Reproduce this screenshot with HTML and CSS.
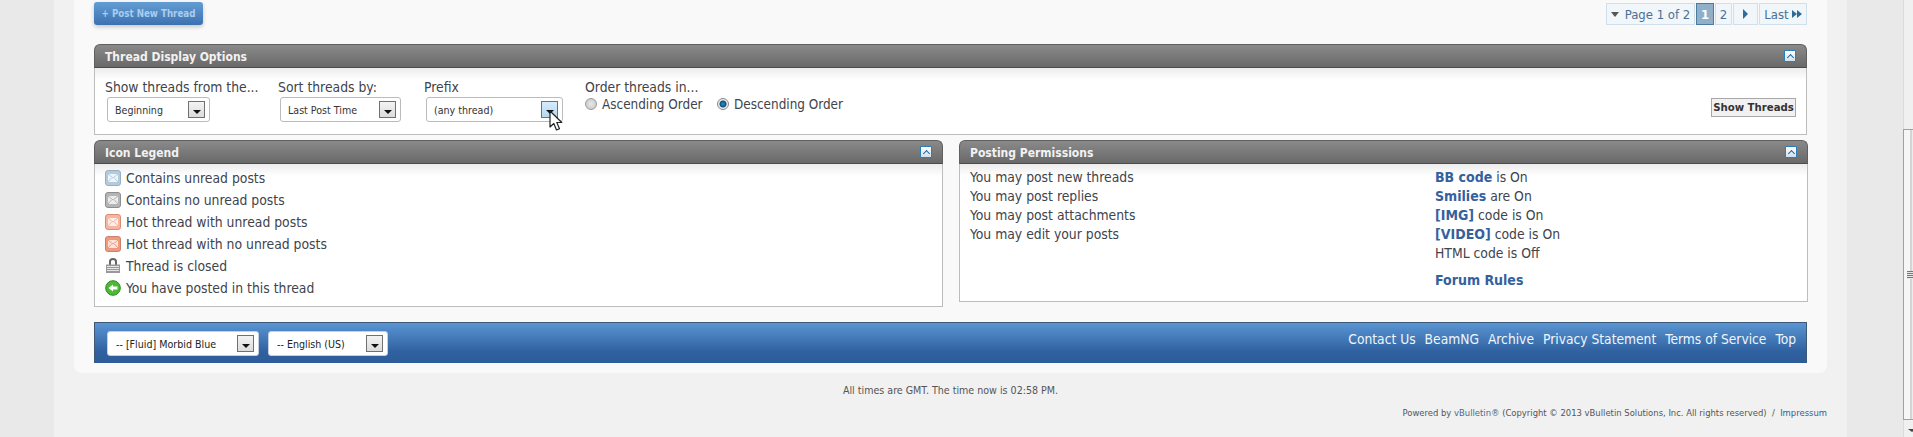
FILE: index.html
```html
<!DOCTYPE html>
<html>
  <head>
    <meta charset="UTF-8">
    <title>Thread options</title>
    <link rel="stylesheet" href="styles.css">
  </head>
  <body>
    <div class="viewport">
      <div class="page">
        <div class="panel">
          <div class="toolbar">
            <a class="newthread" href="#">+ Post New Thread</a>
            <div class="pagination">
              <span class="pg pg-label"><i class="tri-down"></i>Page 1 of 2</span>
              <span class="pg pg-current">1</span>
              <span class="pg pg-num">2</span>
              <span class="pg pg-next"><i class="tri-right"></i></span>
              <span class="pg pg-last">Last <i class="tri-right small"></i><i class="tri-right small"></i></span>
            </div>
          </div>

          <div class="block options">
            <div class="block-head">
              <h4>Thread Display Options</h4>
              <span class="collapse"><i></i></span>
            </div>
            <div class="block-body options-body">
              <div class="opt opt-from">
                <label>Show threads from the...</label>
                <div class="select sel-from">Beginning<span class="sel-btn"><i></i></span></div>
              </div>
              <div class="opt opt-sort">
                <label>Sort threads by:</label>
                <div class="select sel-sort">Last Post Time<span class="sel-btn"><i></i></span></div>
              </div>
              <div class="opt opt-prefix">
                <label>Prefix</label>
                <div class="select sel-prefix">(any thread)<span class="sel-btn hover"><i></i></span></div>
              </div>
              <div class="opt opt-order">
                <label>Order threads in...</label>
                <div class="radios">
                  <span class="radio"></span><span class="radio-text">Ascending Order</span>
                  <span class="radio on"></span><span class="radio-text">Descending Order</span>
                </div>
              </div>
              <button class="show-btn">Show Threads</button>
            </div>
          </div>

          <div class="columns">
            <div class="block legend">
              <div class="block-head">
                <h4>Icon Legend</h4>
                <span class="collapse"><i></i></span>
              </div>
              <div class="block-body legend-body">
                <div class="legend-row">
                  <svg class="ico" viewBox="0 0 16 16"><rect x="0.5" y="0.5" width="15" height="15" rx="2.5" fill="#b4cbdd" stroke="#98afc2"/><rect x="3" y="4" width="10" height="8" fill="#eef5fb"/><path d="M3 4l5 4 5-4M3 12l3.500-4M13 12l-3.500-4" fill="none" stroke="#b4cbdd"/></svg>
                  Contains unread posts
                </div>
                <div class="legend-row">
                  <svg class="ico" viewBox="0 0 16 16"><rect x="0.5" y="0.5" width="15" height="15" rx="2.5" fill="#b5b5b5" stroke="#8e8e8e"/><rect x="3" y="4" width="10" height="8" fill="#ededed"/><path d="M3 4l5 4 5-4M3 12l3.500-4M13 12l-3.500-4" fill="none" stroke="#b5b5b5"/></svg>
                  Contains no unread posts
                </div>
                <div class="legend-row">
                  <svg class="ico" viewBox="0 0 16 16"><rect x="0.5" y="0.5" width="15" height="15" rx="2.5" fill="#f6b5a0" stroke="#d98c74"/><rect x="3" y="4" width="10" height="8" fill="#fdeee8"/><path d="M3 4l5 4 5-4M3 12l3.500-4M13 12l-3.500-4" fill="none" stroke="#f6b5a0"/></svg>
                  Hot thread with unread posts
                </div>
                <div class="legend-row">
                  <svg class="ico" viewBox="0 0 16 16"><rect x="0.5" y="0.5" width="15" height="15" rx="2.5" fill="#ef9a7f" stroke="#c9826b"/><rect x="3" y="4" width="10" height="8" fill="#fce4da"/><path d="M3 4l5 4 5-4M3 12l3.500-4M13 12l-3.500-4" fill="none" stroke="#ef9a7f"/></svg>
                  Hot thread with no unread posts
                </div>
                <div class="legend-row">
                  <svg class="ico" viewBox="0 0 16 16"><path d="M5 7V3.500a3 2.500 0 0 1 6 0V7" fill="none" stroke="#666" stroke-width="2"/><rect x="1" y="6.500" width="14" height="8.500" fill="#999"/><path d="M2 8.500h12M2 10.500h12M2 12.500h12" stroke="#e6e6e6"/></svg>
                  Thread is closed
                </div>
                <div class="legend-row">
                  <svg class="ico" viewBox="0 0 16 16"><circle cx="8" cy="8" r="7.300" fill="#4cba35" stroke="#2b8a1c"/><path d="M3.500 8L8 4.500V6.500H12.500V9.500H8V11.500Z" fill="#fff"/></svg>
                  You have posted in this thread
                </div>
              </div>
            </div>

            <div class="block perms">
              <div class="block-head">
                <h4>Posting Permissions</h4>
                <span class="collapse"><i></i></span>
              </div>
              <div class="block-body perms-body">
                <ul class="perm-col">
                  <li>You may post new threads</li>
                  <li>You may post replies</li>
                  <li>You may post attachments</li>
                  <li>You may edit your posts</li>
                </ul>
                <ul class="perm-col">
                  <li><a href="#">BB code</a> is On</li>
                  <li><a href="#">Smilies</a> are On</li>
                  <li><a href="#">[IMG]</a> code is On</li>
                  <li><a href="#">[VIDEO]</a> code is On</li>
                  <li>HTML code is Off</li>
                  <li class="rules"><a href="#">Forum Rules</a></li>
                </ul>
              </div>
            </div>
          </div>

          <div class="footer-bar">
            <div class="select sel-style">-- [Fluid] Morbid Blue<span class="sel-btn"><i></i></span></div>
            <div class="select sel-lang">-- English (US)<span class="sel-btn"><i></i></span></div>
            <nav class="footer-links">
              <a href="#">Contact Us</a>
              <a href="#">BeamNG</a>
              <a href="#">Archive</a>
              <a href="#">Privacy Statement</a>
              <a href="#">Terms of Service</a>
              <a href="#">Top</a>
            </nav>
          </div>
        </div>

        <p class="times">All times are GMT. The time now is 02:58 PM.</p>
        <p class="powered">Powered by <a href="#">vBulletin®</a> (Copyright © 2013 vBulletin Solutions, Inc. All rights reserved) &nbsp;/&nbsp; <a class="impressum" href="#">Impressum</a></p>
      </div>
      <div class="scrollbar">
        <div class="thumb"><i class="grip"></i></div>
        <i class="sb-down"></i>
      </div>
    </div>
    <svg class="cursor" width="14" height="22" viewBox="0 0 14 22"><path d="M1 1V17L4.800 13.500L7.500 20L10.500 18.700L7.800 12.500L12.800 12.500Z" fill="#fff" stroke="#222" stroke-width="1.200" stroke-linejoin="round"/></svg>
  </body>
</html>
```

FILE: styles.css
```css
* {
  box-sizing: border-box;
}

html, body {
  margin: 0;
  height: 100%;
  overflow: hidden;
}

body {
  font-family: "DejaVu Sans", sans-serif;
  font-stretch: condensed;
  font-size: 13.800px;
  color: #40444c;
  background: #e9e9e9;
}

a {
  text-decoration: none;
}

.viewport {
  display: flex;
  height: 437px;
}

.page {
  width: 1793px;
  height: 437px;
  margin-left: 54px;
  margin-right: 56px;
  padding: 0 20px;
  background: #f1f1f1;
  overflow: hidden;
}

.panel {
  height: 373px;
  padding: 2px 20px 0;
  background: #f9f9f9;
  border-radius: 0 0 8px 8px;
}

/* top row */
.toolbar {
  display: flex;
  justify-content: space-between;
  align-items: flex-start;
  height: 42px;
}

.newthread {
  display: block;
  width: 109px;
  height: 23px;
  line-height: 23px;
  text-align: center;
  font-size: 9.700px;
  font-weight: bold;
  color: #a9cdee;
  background: linear-gradient(#649dd3, #3c71b0);
  border-radius: 3px;
  box-shadow: 0 2px 4px rgba(0, 0, 0, 0.2);
}

.pagination {
  display: flex;
  gap: 1px;
  margin-top: 1px;
  height: 22px;
}

.pg {
  display: flex;
  align-items: center;
  justify-content: center;
  height: 22px;
  font-size: 13px;
  color: #4d6f92;
  background: #f0f6fa;
  border: 1px solid #cfe0ec;
}

.pg-label { width: 89px; }
.pg-current { width: 18px; background: #8fb0c8; border-color: #4a7ba0; color: #fff; font-weight: bold; }
.pg-num { width: 17px; }
.pg-next { width: 25px; }
.pg-last { width: 48px; }

.tri-down {
  width: 0;
  height: 0;
  margin-right: 6px;
  border: 4px solid transparent;
  border-top: 5px solid #555;
  border-bottom: 0;
}

.tri-right {
  width: 0;
  height: 0;
  border: 5px solid transparent;
  border-left: 5px solid #2f6b96;
  border-right: 0;
}

.tri-right.small {
  border-width: 4px 0 4px 5px;
  border-color: transparent transparent transparent #2f6b96;
  margin-left: 0;
}

.pg-last .tri-right:first-of-type {
  margin-left: 3px;
}

/* blocks */
.block-head {
  display: flex;
  justify-content: space-between;
  align-items: center;
  height: 24px;
  padding: 0 10px;
  color: #fff;
  background: linear-gradient(#8a8a8a, #696969);
  border: 1px solid #5f5f5f;
  border-bottom-color: #4c4c4c;
  border-radius: 6px 6px 0 0;
}

.block-head h4 {
  margin: 1px 0 0;
  font-size: 12px;
  font-weight: bold;
  color: #f2f2f2;
}

.collapse {
  display: flex;
  align-items: center;
  justify-content: center;
  width: 12px;
  height: 12px;
  background: linear-gradient(#ffffff, #cfe0ee);
  border: 1px solid #2f7db5;
  border-radius: 1px;
}

.collapse i {
  width: 5px;
  height: 5px;
  margin-top: 3px;
  border-left: 1.500px solid #1f6b9e;
  border-top: 1.500px solid #1f6b9e;
  transform: rotate(45deg);
}

.block-body {
  background: #fff linear-gradient(#ececec, #ffffff 12px);
  border: 1px solid #bdbdbd;
  border-top: 0;
}

.options-body {
  display: flex;
  height: 67px;
  padding: 10px 10px 0 10px;
}

.opt label {
  display: block;
  height: 18px;
  line-height: 18px;
}

.opt-from { width: 173px; }
.opt-sort { width: 146px; }
.opt-prefix { width: 161px; }
.opt-order { flex: 1; }

.select {
  position: relative;
  height: 25px;
  line-height: 25px;
  padding-left: 7px;
  font-size: 10.600px;
  color: #333;
  background: #fff;
  border: 1px solid #bbb;
  border-radius: 3px;
}

.opt .select {
  margin-left: 2px;
  margin-top: 1px;
}

.sel-from { width: 103px; }
.sel-sort { width: 121px; }
.sel-prefix { width: 137px; }

.sel-btn {
  position: absolute;
  right: 4px;
  top: 3px;
  display: flex;
  align-items: flex-end;
  justify-content: center;
  width: 17px;
  height: 17px;
  padding-bottom: 3px;
  background: linear-gradient(#f3f3f3, #dcdcdc);
  border: 1px solid #707070;
}

.sel-btn.hover {
  background: linear-gradient(#d6ecfb, #b4d8f1);
  border-color: #3c7fb1;
}

.sel-btn i {
  width: 0;
  height: 0;
  border: 4px solid transparent;
  border-top: 4px solid #111;
  border-bottom: 0;
}

.radios {
  display: flex;
  align-items: center;
  height: 16px;
  font-size: 13.400px;
}

.radio {
  width: 12px;
  height: 12px;
  margin-right: 5px;
  border-radius: 50%;
  border: 1px solid #9a9a9a;
  background: radial-gradient(#e8e8e8, #c4c4c4);
}

.radio.on {
  background: radial-gradient(#2f93c6 0, #0d4f7e 3px, #ececec 4px);
  border-color: #888;
}

.radio-text {
  width: 115px;
  white-space: nowrap;
}

.show-btn {
  flex: none;
  width: 85px;
  height: 19px;
  margin-top: 20px;
  padding: 0;
  white-space: nowrap;
  font-family: inherit;
  font-stretch: condensed;
  font-size: 11.300px;
  font-weight: bold;
  color: #333;
  background: #f1f1f1;
  border: 1px solid #a8a8a8;
}

.options {
  margin-bottom: 5px;
}

.columns {
  display: flex;
  justify-content: space-between;
  align-items: flex-start;
  margin-right: -1px;
}

.legend { width: 849px; }
.perms { width: 849px; }

.legend-body {
  height: 143px;
  padding: 3px 10px 0;
}

.legend-row {
  display: flex;
  align-items: center;
  gap: 5px;
  height: 22px;
}

.ico {
  width: 16px;
  height: 16px;
  flex: none;
}

.perms-body {
  display: flex;
  height: 138px;
  padding: 4px 10px 0;
}

.perm-col {
  margin: 0;
  padding: 0;
  list-style: none;
}

.perm-col:first-child {
  width: 465px;
}

.perm-col li {
  height: 19px;
  line-height: 19px;
}

.perm-col a {
  font-weight: bold;
  font-size: 14px;
  color: #35609e;
}

.perm-col li.rules {
  margin-top: 8px;
}

/* blue bar */
.footer-bar {
  display: flex;
  align-items: center;
  gap: 9px;
  height: 41px;
  margin-top: 15px;
  padding: 0 10px 0 12px;
  background: linear-gradient(#5a95d3, #2f609f 75%, #2d5c9a);
  border: 1px solid #3f5873;
  border-bottom-color: #2d5c9a;
}

.footer-bar .select {
  margin-top: 1px;
  padding-left: 8px;
  color: #222;
  border-color: #c4d0dd;
}

.sel-style { width: 152px; }
.sel-lang { width: 120px; }

.footer-links {
  display: flex;
  gap: 9px;
  margin-left: auto;
  padding-bottom: 8px;
  font-size: 13.700px;
}

.footer-links a {
  color: #eef6fd;
}

/* below the panel */
.times {
  margin: 10px 0 0;
  text-align: center;
  font-size: 10.600px;
  line-height: 14px;
  color: #555;
}

.powered {
  margin: 9px 0 0;
  text-align: right;
  font-size: 9.400px;
  line-height: 14px;
  color: #555;
}

.powered a {
  color: #4c6a8e;
}

.powered .impressum {
  color: #2c6396;
}

/* browser scrollbar */
.scrollbar {
  position: relative;
  flex: 1;
  background: #f0f0f0;
  border-left: 1px solid #dcdcdc;
}

.thumb {
  position: absolute;
  left: -1px;
  right: 0;
  top: 129px;
  height: 291px;
  background: linear-gradient(90deg, #f6f6f6 0 6px, #d4d4d4 6px 8px, #ececec 8px);
  border: 1px solid #a0a0a0;
  border-right: 0;
}

.grip {
  position: absolute;
  left: 3px;
  right: 0;
  top: 141px;
  height: 8px;
  background: repeating-linear-gradient(#777 0 1px, #e8e8e8 1px 2px);
}

.sb-down {
  position: absolute;
  left: 4px;
  bottom: 5px;
  width: 0;
  height: 0;
  border: 4px solid transparent;
  border-top: 3px solid #444;
  border-bottom: 0;
}

.cursor {
  position: absolute;
  left: 549px;
  top: 110px;
}
```
